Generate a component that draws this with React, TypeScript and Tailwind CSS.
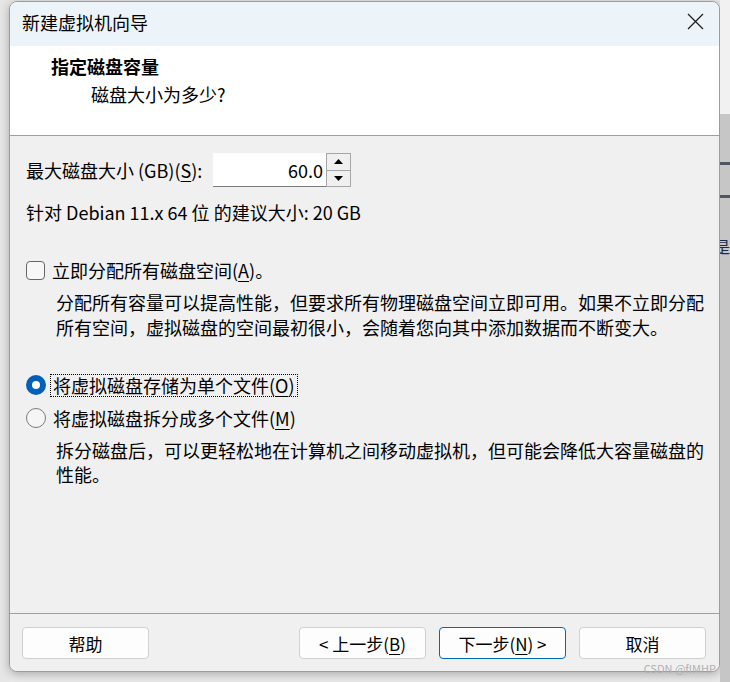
import React from "react";

const font = { fontFamily: '"Noto Sans CJK SC", "Noto Sans", sans-serif' };

function U({ children }: { children: React.ReactNode }) {
  return <span className="underline underline-offset-[3px] decoration-1">{children}</span>;
}

function Btn({ children, primary }: { children: React.ReactNode; primary?: boolean }) {
  return (
    <div
      className={`w-[127px] h-[32px] rounded-[4px] border bg-[#fdfdfd] flex items-center justify-center text-[17px] leading-none text-black ${
        primary ? "border-[#0067c0]" : "border-[#d0d0d0]"
      }`}
    >
      {children}
    </div>
  );
}

export default function App() {
  return (
    <div className="w-[730px] h-[682px] bg-[#e8e8e8] flex overflow-hidden relative" style={font}>
      {/* left gutter */}
      <div className="w-[9px] shrink-0 bg-[#e6e6e6]" />

      {/* dialog column */}
      <div className="w-[711px] shrink-0 flex flex-col">
        <div className="mt-[1px] h-[671px] rounded-[8px] border border-[#9c9c9c] overflow-hidden flex flex-col shadow-[0_2px_10px_rgba(0,0,0,0.28)] bg-[#f0f0f0]">
          {/* title bar */}
          <div className="h-[44px] shrink-0 bg-[#edf4f9] flex items-center justify-between pl-[12px] pr-[15px] pb-[5px]">
            <span className="text-[18px] leading-none text-black">新建虚拟机向导</span>
            <svg width="17" height="17" viewBox="0 0 17 17" className="text-[#1a1a1a]">
              <path d="M1 1 L16 16 M16 1 L1 16" stroke="currentColor" strokeWidth="1.2" fill="none" />
            </svg>
          </div>

          {/* header */}
          <div className="h-[90px] shrink-0 bg-white border-b border-[#a0a0a0] pl-[41px] pt-[8px]">
            <div className="text-[18px] leading-[24px] font-bold text-black">指定磁盘容量</div>
            <div className="text-[18px] leading-[24px] text-black mt-[4px] ml-[40px]">磁盘大小为多少?</div>
          </div>

          {/* body */}
          <div className="flex-1 bg-[#f0f0f0] px-[16px] pt-[17px] text-[18px] text-black whitespace-nowrap">
            <div className="flex items-center h-[34px]">
              <span className="w-[187px] shrink-0 leading-[24px]">
                最大磁盘大小 (GB)(<U>S</U>):
              </span>
              <div className="w-[113px] h-[34px] bg-white border-b border-[#7a7a7a] flex items-center justify-end pr-[3px] leading-none">
                60.0
              </div>
              <div className="w-[25px] h-[34px] flex flex-col border border-[#a6a6a6] bg-[#f0f0f0]">
                <div className="flex-1 flex items-center justify-center border-b border-[#a6a6a6]">
                  <svg width="9" height="5" viewBox="0 0 9 5">
                    <path d="M0 5 L4.5 0 L9 5 Z" fill="#000" />
                  </svg>
                </div>
                <div className="flex-1 flex items-center justify-center">
                  <svg width="9" height="5" viewBox="0 0 9 5">
                    <path d="M0 0 L4.5 5 L9 0 Z" fill="#000" />
                  </svg>
                </div>
              </div>
            </div>

            <div className="mt-[13px] leading-[24px]">针对 Debian 11.x 64 位 的建议大小: 20 GB</div>

            <div className="mt-[34px] flex items-center h-[24px]">
              <div className="w-[19px] h-[19px] rounded-[4px] border border-[#666] bg-[#f7f7f7] shrink-0" />
              <span className="ml-[7px] leading-[24px]">
                立即分配所有磁盘空间(<U>A</U>)。
              </span>
            </div>

            <div className="mt-[8px] ml-[30px] leading-[25px]">
              <div>分配所有容量可以提高性能，但要求所有物理磁盘空间立即可用。如果不立即分配</div>
              <div>所有空间，虚拟磁盘的空间最初很小，会随着您向其中添加数据而不断变大。</div>
            </div>

            <div className="mt-[33px] flex items-center h-[24px]">
              <div className="w-[20px] h-[20px] rounded-full bg-[#005fb8] flex items-center justify-center shrink-0">
                <div className="w-[8px] h-[8px] rounded-full bg-white" />
              </div>
              <span className="ml-[4px] px-[2px] border border-dotted border-black leading-[21px]">
                将虚拟磁盘存储为单个文件(<U>O</U>)
              </span>
            </div>

            <div className="mt-[9px] flex items-center h-[24px]">
              <div className="w-[20px] h-[20px] rounded-full border border-[#7a7a7a] bg-[#f5f5f5] shrink-0" />
              <span className="ml-[7px] leading-[24px]">
                将虚拟磁盘拆分成多个文件(<U>M</U>)
              </span>
            </div>

            <div className="mt-[8px] ml-[30px] leading-[24px]">
              <div>拆分磁盘后，可以更轻松地在计算机之间移动虚拟机，但可能会降低大容量磁盘的</div>
              <div>性能。</div>
            </div>
          </div>

          {/* footer */}
          <div className="h-[58px] shrink-0 border-t border-[#a0a0a0] bg-[#f0f0f0] flex pt-[13px] pl-[12px] pr-[13px]">
            <Btn>帮助</Btn>
            <div className="flex-1" />
            <Btn>
              &lt; 上一步(<U>B</U>)
            </Btn>
            <div className="w-[13px]" />
            <Btn primary>
              下一步(<U>N</U>) &gt;
            </Btn>
            <div className="w-[13px]" />
            <Btn>取消</Btn>
          </div>
        </div>
      </div>

      {/* right strip: window behind */}
      <div className="w-[10px] shrink-0 flex flex-col">
        <div className="h-[114px] bg-[#f1f1f1]" />
        <div className="flex-1 bg-[#c6c6c6] flex flex-col">
          <div className="h-[48px]" />
          <div className="h-[3px] bg-[#4f5862]" />
          <div className="h-[30px]" />
          <div className="h-[3px] bg-[#4f5862]" />
          <div className="h-[38px]" />
          <div className="h-[20px] flex justify-end overflow-hidden text-[16px] leading-[20px] text-[#1b2a4a] whitespace-nowrap">
            是
          </div>
        </div>
      </div>

      {/* watermark */}
      <div className="absolute right-[14px] bottom-[8px] text-[11px] leading-none text-[#b0b0b0]">
        CSDN @fIMHP
      </div>
    </div>
  );
}
